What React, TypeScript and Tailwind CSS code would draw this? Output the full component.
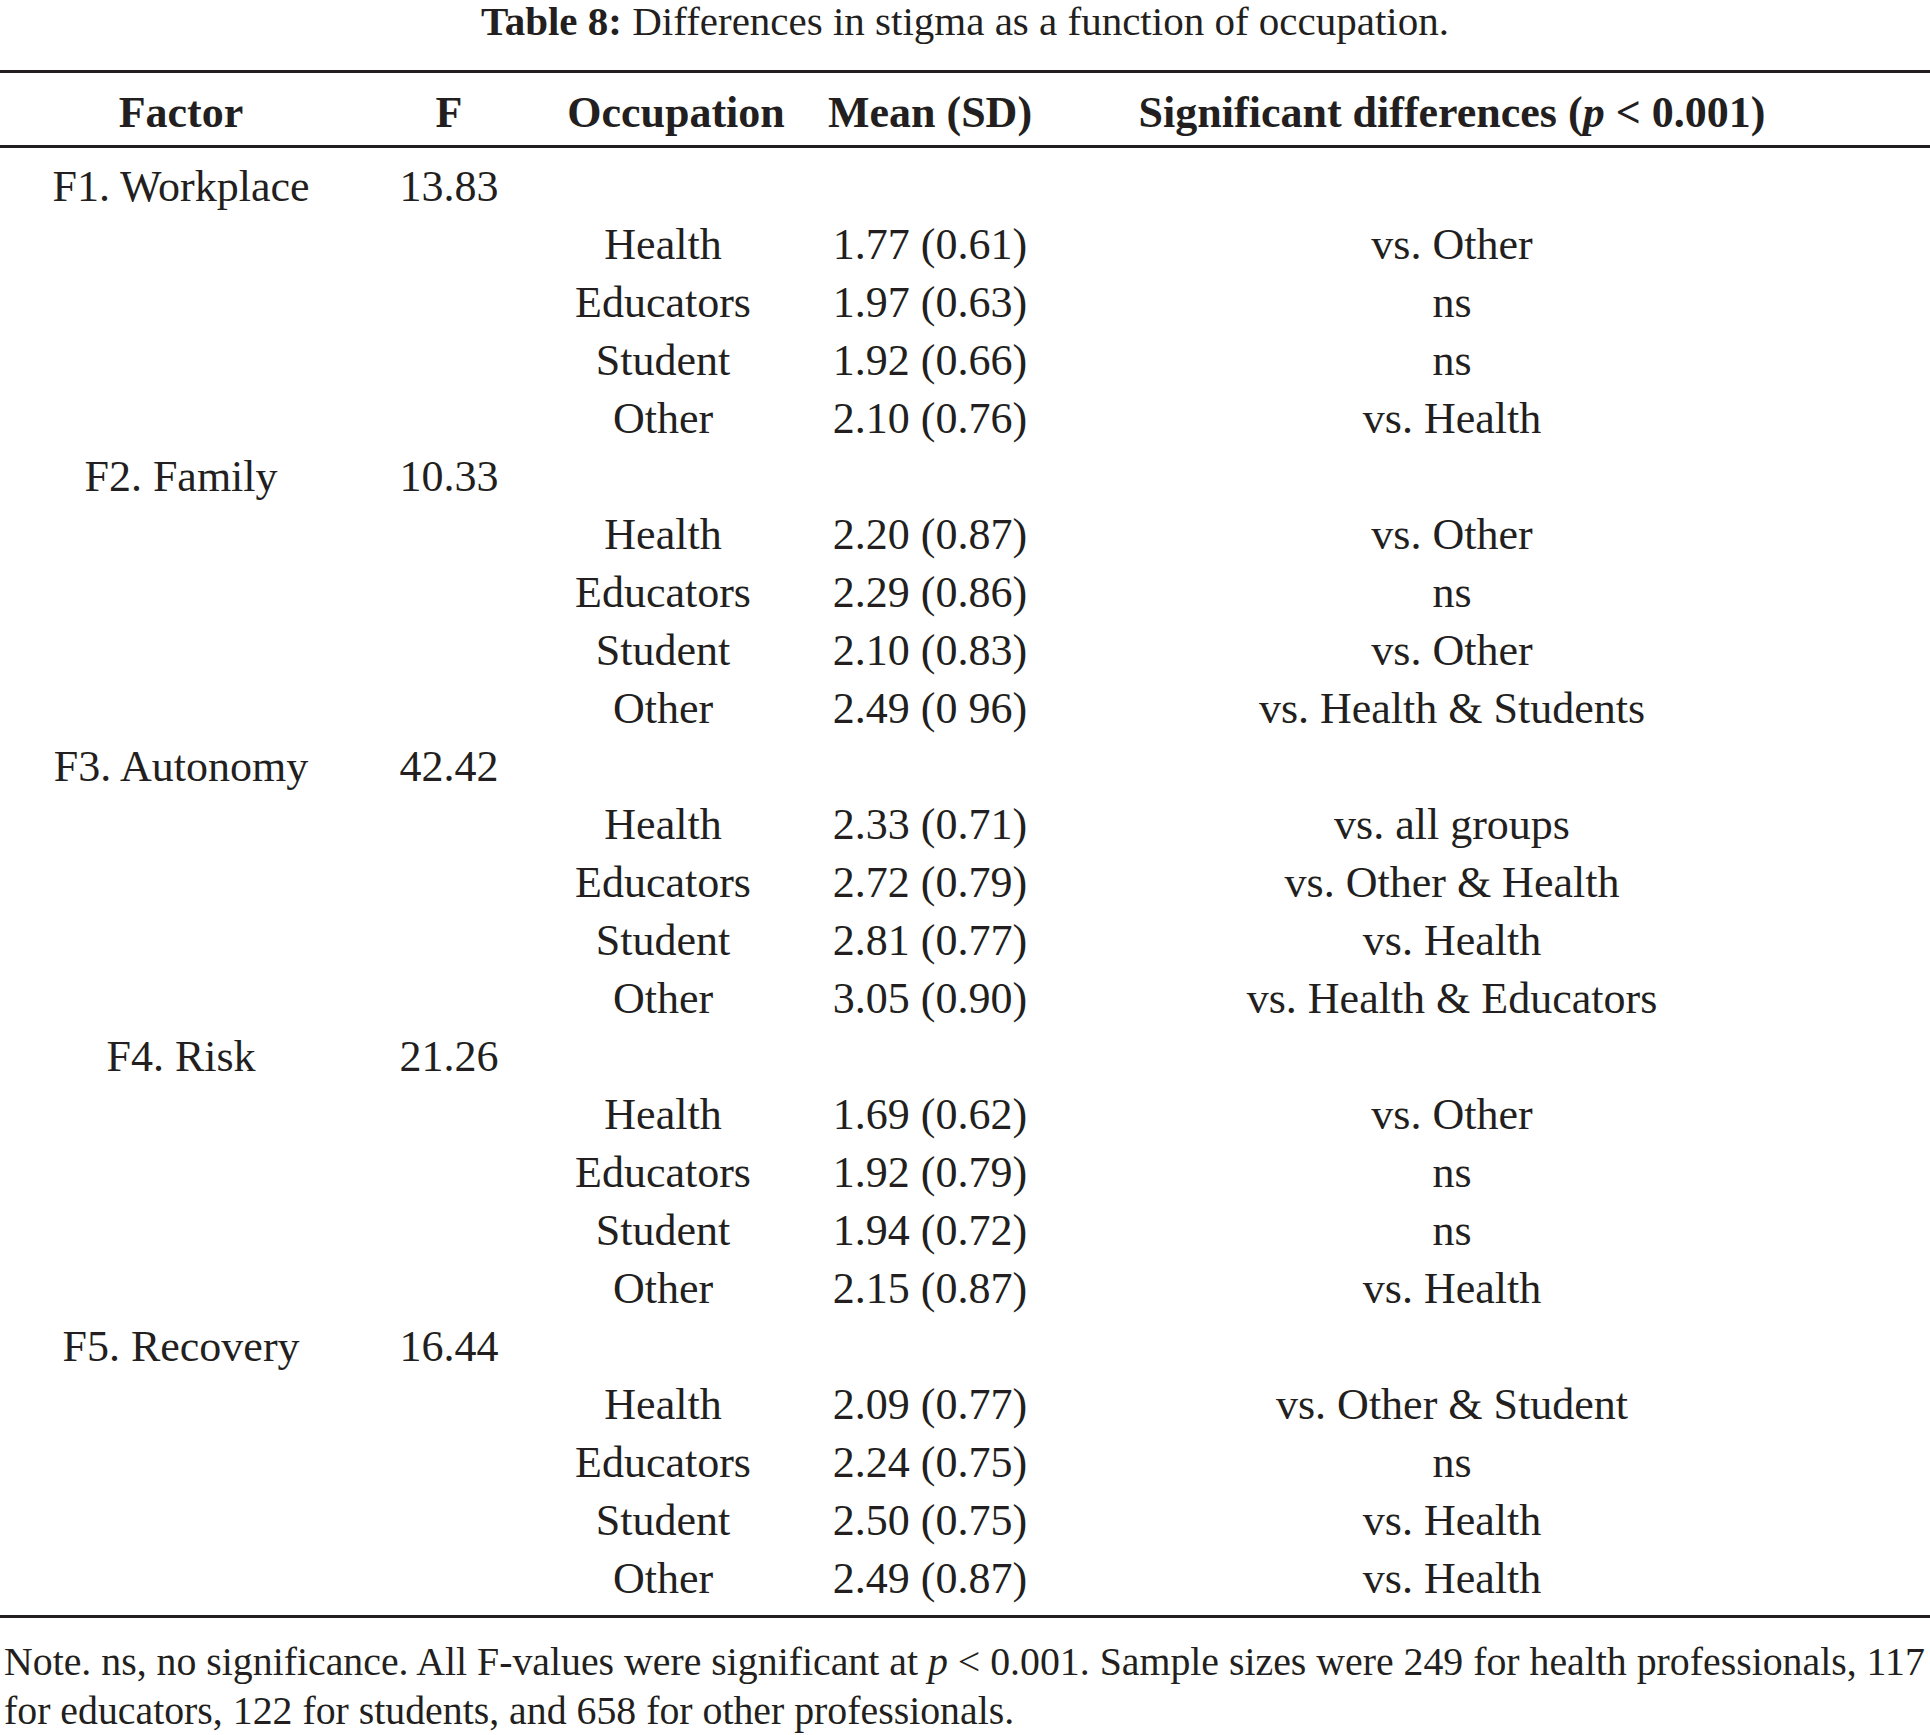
import React from 'react'

type Group = {
  factor: string
  f: string
  rows: [string, string, string][]
}

const groups: Group[] = [
  {
    factor: 'F1. Workplace',
    f: '13.83',
    rows: [
      ['Health', '1.77 (0.61)', 'vs. Other'],
      ['Educators', '1.97 (0.63)', 'ns'],
      ['Student', '1.92 (0.66)', 'ns'],
      ['Other', '2.10 (0.76)', 'vs. Health'],
    ],
  },
  {
    factor: 'F2. Family',
    f: '10.33',
    rows: [
      ['Health', '2.20 (0.87)', 'vs. Other'],
      ['Educators', '2.29 (0.86)', 'ns'],
      ['Student', '2.10 (0.83)', 'vs. Other'],
      ['Other', '2.49 (0 96)', 'vs. Health & Students'],
    ],
  },
  {
    factor: 'F3. Autonomy',
    f: '42.42',
    rows: [
      ['Health', '2.33 (0.71)', 'vs. all groups'],
      ['Educators', '2.72 (0.79)', 'vs. Other & Health'],
      ['Student', '2.81 (0.77)', 'vs. Health'],
      ['Other', '3.05 (0.90)', 'vs. Health & Educators'],
    ],
  },
  {
    factor: 'F4. Risk',
    f: '21.26',
    rows: [
      ['Health', '1.69 (0.62)', 'vs. Other'],
      ['Educators', '1.92 (0.79)', 'ns'],
      ['Student', '1.94 (0.72)', 'ns'],
      ['Other', '2.15 (0.87)', 'vs. Health'],
    ],
  },
  {
    factor: 'F5. Recovery',
    f: '16.44',
    rows: [
      ['Health', '2.09 (0.77)', 'vs. Other & Student'],
      ['Educators', '2.24 (0.75)', 'ns'],
      ['Student', '2.50 (0.75)', 'vs. Health'],
      ['Other', '2.49 (0.87)', 'vs. Health'],
    ],
  },
]

const cols = 'grid grid-cols-[362px_174px_280px_228px_816px] text-center'

export default function App() {
  return (
    <div className="w-[1930px] bg-white text-[#231f20] font-['Liberation_Serif',serif]">
      <div className="h-[70px] text-center text-[41px] leading-[42px]">
        <span className="font-bold">Table 8:</span> Differences in stigma as a function of occupation.
      </div>
      <div className="h-[3px] bg-[#231f20]" />

      <div className={`${cols} h-[72px] pt-[11px] text-[44px] leading-[58px] font-bold`}>
        <div>Factor</div>
        <div>F</div>
        <div>Occupation</div>
        <div>Mean (SD)</div>
        <div>
          Significant differences (<span className="italic">p</span> &lt; 0.001)
        </div>
      </div>
      <div className="h-[3px] bg-[#231f20]" />

      <div className="pt-[10px] pb-[7px] text-[44px] leading-[58px]">
        {groups.map((g) => (
          <div key={g.factor}>
            <div className={cols}>
              <div>{g.factor}</div>
              <div>{g.f}</div>
              <div />
              <div />
              <div />
            </div>
            {g.rows.map(([occ, mean, sig]) => (
              <div key={occ} className={cols}>
                <div />
                <div />
                <div className="pr-[26px]">{occ}</div>
                <div>{mean}</div>
                <div>{sig}</div>
              </div>
            ))}
          </div>
        ))}
      </div>
      <div className="h-[3px] bg-[#231f20]" />

      <div className="pt-[20px] pl-[4px] text-[39.8px] leading-[49px] whitespace-nowrap">
        <div>
          Note. ns, no significance. All F-values were significant at <span className="italic">p</span> &lt; 0.001. Sample sizes were 249 for health professionals, 117
        </div>
        <div>for educators, 122 for students, and 658 for other professionals.</div>
      </div>
    </div>
  )
}
